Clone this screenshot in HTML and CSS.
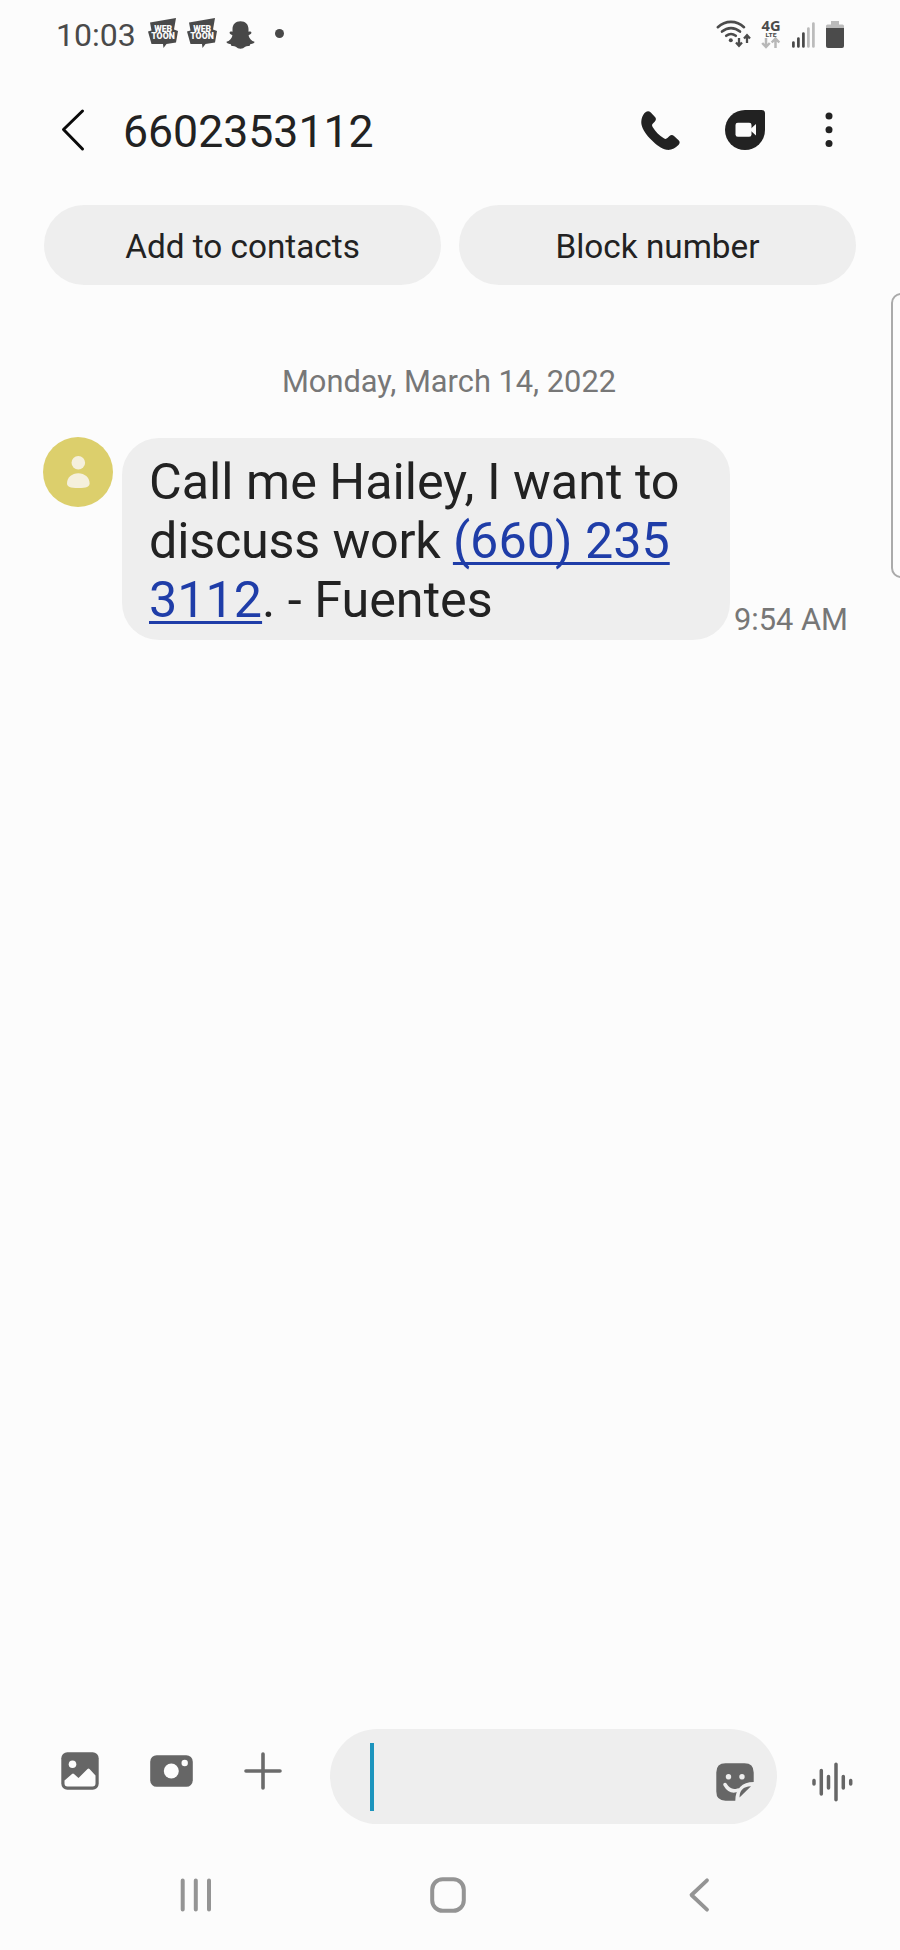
FILE: index.html
```html
<!DOCTYPE html>
<html lang="en">
<head>
<meta charset="utf-8">
<title>6602353112</title>
<link rel="stylesheet" href="styles.css">
</head>
<body>
<div class="screen">
  <div class="status">
    <span class="clock">10:03</span>
    <svg class="toon" width="30" height="31" viewBox="0 0 30 31"><path d="M2 4.500 28 0 26 11.500 30 13 28 24.500 18.500 26 15.500 30 15 26 3.500 26 0 13.500 3.500 12.500Z" fill="#4a4a4a"/><text x="15.200" y="13.500" textLength="18" lengthAdjust="spacingAndGlyphs" class="toon-text">WEB</text><text x="15" y="21.300" textLength="23.500" lengthAdjust="spacingAndGlyphs" class="toon-text">TOON</text></svg>
    <svg class="toon toon-second" width="30" height="31" viewBox="0 0 30 31"><path d="M2 4.500 28 0 26 11.500 30 13 28 24.500 18.500 26 15.500 30 15 26 3.500 26 0 13.500 3.500 12.500Z" fill="#4a4a4a"/><text x="15.200" y="13.500" textLength="18" lengthAdjust="spacingAndGlyphs" class="toon-text">WEB</text><text x="15" y="21.300" textLength="23.500" lengthAdjust="spacingAndGlyphs" class="toon-text">TOON</text></svg>
    <svg class="ghost" width="29" height="28" viewBox="0 0 29 28"><path d="M14.500.3c5 0 8 3.200 8 7.800v2.700c1.300-.4 2.700-.3 2.900.8.200 1-1 1.900-2.900 2.800 1 3.300 3 5.500 6 6.400.3 1.200-1.400 1.900-4.300 2.400l-.7 1.900c-1.700-.1-3.100-.1-4.300.6-1.500 1-2.700 2-4.700 2s-3.200-1-4.700-2c-1.200-.7-2.600-.7-4.300-.6l-.7-1.900C1.900 22.700.2 22 .5 20.800c3-.9 5-3.100 6-6.400-1.900-.9-3.100-1.800-2.900-2.800.2-1.100 1.600-1.200 2.900-.8V8.100c0-4.600 3-7.800 8-7.800Z" fill="#484848"/></svg>
    <span class="more-dot"></span>
    <svg class="wifi" width="36" height="29" viewBox="0 0 36 29" fill="none" stroke="#4b4b4b" stroke-width="2.600" stroke-linecap="round"><path d="M1.800 7.200C9.500.1 20.500.1 28 7.200M6 11.600c5.500-4.700 12.500-4.700 18 0M10.200 15.800c3-2.300 6.600-2.300 9.600 0"/><circle cx="14.800" cy="20.300" r="2" fill="#4b4b4b" stroke="none"/><path d="M23 18v7.500M20 22.500l3 3.200 3-3.200M31 23v-7.500M28 18.500l3-3.200 3 3.200" stroke-width="2.300" stroke-linecap="butt"/></svg>
    <svg class="lte" width="20" height="29" viewBox="0 0 20 29"><path d="M5 18v8.500M1.200 23 5 27l3.800-4M14.500 28v-9M10.700 22.500l3.800-4 3.800 4" fill="none" stroke="#b8b8b8" stroke-width="2.500"/><text x="10" y="11.300" textLength="19" lengthAdjust="spacingAndGlyphs" class="net-gen">4G</text><text x="10" y="16.600" textLength="11" lengthAdjust="spacingAndGlyphs" class="net-type">LTE</text></svg>
    <svg class="bars" width="23" height="26" viewBox="0 0 23 26" stroke-width="2.700" stroke-linecap="round"><path d="M1.400 20.500v4M6.400 16.500v8M11.400 11.500v13" stroke="#484848"/><path d="M16.400 6.500v18M21.400 1.500v23" stroke="#bbb"/></svg>
    <svg class="battery" width="18" height="27" viewBox="0 0 18 27"><path d="M5 0h8v3.500h3.500Q18 3.500 18 5v3H0V5q0-1.500 1.500-1.500H5Z" fill="#bbb"/><path d="M0 7h18v18q0 2-2 2H2q-2 0-2-2Z" fill="#4b4b4b"/></svg>
  </div>

  <header class="header">
    <svg class="back" width="24" height="42" viewBox="0 0 24 42"><path d="M21.500 2 2.500 20.500 21.500 40" fill="none" stroke="#0a0a0a" stroke-width="3" stroke-linecap="round" stroke-linejoin="round"/></svg>
    <h1 class="title">6602353112</h1>
    <svg class="phone" width="39" height="39" viewBox="0 0 39 39"><path d="M4.500 1.200C6.500-.2 8-.2 9.800 1.600l4.200 4.500c1.300 1.400 1.200 3-.1 4.300l-2.200 2.300c-1 1.100-.7 2.200.1 3.600 2.800 4.700 6.500 8.400 11 11 1.400.8 2.500.8 3.600-.2l2.100-2c1.400-1.400 3-1.500 4.500-.1l4.600 4.300c1.400 1.400 1.400 3 .1 4.400-3.200 3.500-7.600 5.800-12.300 5.100-5-.8-10.200-5-14.900-9.700C5.800 24.400 1.500 18.600.5 13.500-.2 9.300 1.100 3.700 4.500 1.200Z" fill="#222"/></svg>
    <svg class="duo" width="40" height="40" viewBox="0 0 40 40"><path d="M20 0h16.500Q40 0 40 3.500V20A20 20 0 1 1 20 0Z" fill="#222"/><rect x="10.500" y="12.800" width="16" height="14" rx="2.300" fill="#fcfcfc"/><path d="M26 18.500 31 14v11.500l-5-4.500Z" fill="#fcfcfc"/></svg>
    <svg class="kebab" width="8" height="36" viewBox="0 0 8 36" fill="#222"><circle cx="4" cy="4" r="3.500"/><circle cx="4" cy="17.800" r="3.500"/><circle cx="4" cy="31.500" r="3.500"/></svg>
  </header>

  <div class="actions">
    <button class="action">Add to contacts</button>
    <button class="action">Block number</button>
  </div>

  <main class="thread">
    <p class="date">Monday, March 14, 2022</p>
    <div class="message">
      <svg class="avatar" width="70" height="70" viewBox="0 0 70 70"><circle cx="35" cy="35" r="35" fill="#dccf6c"/><circle cx="35.300" cy="25.700" r="6.800" fill="#f5f0dc"/><path d="M24 46.500c0-6 5-10.200 11.300-10.200s11.300 4.200 11.300 10.200c0 3-3 4.600-11.300 4.600S24 49.500 24 46.500Z" fill="#f5f0dc"/></svg>
      <div class="bubble">Call me Hailey, I want to<br><span class="tight">discuss work </span><a class="tel">(660) 235<br>3112</a>. - Fuentes</div>
      <span class="time">9:54 AM</span>
    </div>
  </main>

  <div class="composer">
    <svg class="gallery" width="38" height="38" viewBox="0 0 38 38"><rect x=".3" y=".3" width="37.400" height="37.400" rx="6" fill="#666"/><circle cx="11.500" cy="12.300" r="3.800" fill="#fcfcfc"/><path d="M3.500 28.500 11 22q1-.8 2 0l4.500 4 9-9q1-1 2 0l6 6.500v8q0 3-3 3h-25q-3 0-3-3Z" fill="#fcfcfc"/></svg>
    <svg class="camera" width="43" height="32" viewBox="0 0 43 32"><rect x=".2" y=".2" width="42.600" height="31.600" rx="6.500" fill="#666"/><circle cx="21.300" cy="16" r="7.500" fill="#fcfcfc"/><circle cx="34.700" cy="8" r="3.200" fill="#fcfcfc"/></svg>
    <svg class="plus" width="38" height="38" viewBox="0 0 38 38"><path d="M19 2v34M2 19h34" stroke="#6b6b6b" stroke-width="3.600" stroke-linecap="round"/></svg>
    <div class="field">
      <span class="caret"></span>
      <svg class="sticker" width="38" height="38" viewBox="0 0 38 38"><path d="M9.500.3h19Q37.700.3 37.700 9.500V19C26 19 19.300 26 19.300 37.700H9.500Q.3 37.700.3 28.500v-19Q.3.300 9.500.3Z" fill="#666"/><circle cx="12.500" cy="13.800" r="2.700" fill="#eee"/><circle cx="26" cy="13.800" r="2.700" fill="#eee"/><path d="M9 21.500c3.500 6 8 7.500 13 5.500" fill="none" stroke="#eee" stroke-width="3.500" stroke-linecap="round"/><path d="M23.500 34.500c0-7 3.500-11 11.500-11.300Z" fill="#666"/></svg>
    </div>
    <svg class="voice" width="41" height="40" viewBox="0 0 41 40" fill="none" stroke="#666" stroke-width="3.500" stroke-linecap="round"><path d="M2 18.500v3.500M9.300 8.500v23.500M16.500 14.500v11.500M24 2.200v35.600M31.300 14.500v11.500M38.700 18.500v3.500"/></svg>
  </div>

  <nav class="nav">
    <svg class="recents" width="32" height="34" viewBox="0 0 32 34"><path d="M2.700 2.500v29M15.800 2.500v29M29 2.500v29" stroke="#949494" stroke-width="4" stroke-linecap="round"/></svg>
    <svg class="home" width="36" height="36" viewBox="0 0 36 36"><rect x="2.200" y="2.200" width="31.600" height="31.600" rx="10.500" fill="none" stroke="#949494" stroke-width="4"/></svg>
    <svg class="nav-back" width="21" height="34" viewBox="0 0 21 34"><path d="M18 2.300 2.500 17 18 31.700" fill="none" stroke="#949494" stroke-width="3.800" stroke-linecap="round" stroke-linejoin="round"/></svg>
  </nav>
  <div class="edge-handle"></div>
</div>
</body>
</html>
```
FILE: styles.css
```css
* { box-sizing: border-box; }
body { margin: 0; background: #fcfcfc; font-family: Roboto, "Liberation Sans", sans-serif; }
svg { display: block; flex: none; overflow: visible; }
.screen { position: relative; display: flex; flex-direction: column; width: 900px; height: 1950px; overflow: hidden; color: #222; }

.status { display: flex; align-items: center; height: 70px; padding-left: 56px; }
.clock { width: 92px; font-size: 32px; line-height: 38px; color: #4a4a4a; white-space: nowrap; }
.toon { margin-top: -3px; }
.toon-second { margin-left: 9px; }
.toon-text { font: 900 8.500px Roboto, sans-serif; fill: #fcfcfc; text-anchor: middle; }
.ghost { margin: -1px 0 0 9px; }
.more-dot { width: 9px; height: 9px; margin: -4px 0 0 20px; border-radius: 50%; background: #484848; }
.wifi { margin: -2px 0 0 auto; }
.lte { margin: -1px 0 0 9px; }
.net-gen { font: 700 14.500px "Open Sans", sans-serif; fill: #4b4b4b; text-anchor: middle; }
.net-type { font: 700 6px Roboto, sans-serif; fill: #4b4b4b; text-anchor: middle; }
.bars { margin: 0 0 0 11px; }
.battery { margin: -2px 56px 0 11px; }

.header { display: flex; align-items: center; height: 120px; padding-left: 61px; }
.title { margin: 4px 0 0 38px; width: 517px; font-size: 44.600px; line-height: 52px; font-weight: 400; }
.phone { margin-left: 1px; }
.duo { margin-left: 45px; }
.kebab { margin-left: 60px; }

.actions { display: flex; gap: 18px; margin-top: 15px; padding: 0 44px; height: 80px; }
.action { flex: 1; padding: 3px 0 0; border: 0; border-radius: 40px; background: #eee; color: #222; font: 400 33.300px/38px Roboto, sans-serif; }

.thread { flex: 1; }
.date { margin: 77px 2px 0 0; height: 75px; font-size: 30.800px; line-height: 40px; color: #777; text-align: center; }
.message { display: flex; padding-left: 43px; }
.bubble { width: 608px; height: 202px; margin: 1px 0 0 9px; padding: 14px 0 0 27px; border-radius: 37px; background: #eee; font-size: 50.300px; line-height: 59.200px; white-space: nowrap; }
.tight { letter-spacing: -.2px; }
.tel { color: #1f3da8; text-decoration: underline; text-decoration-thickness: 2.500px; text-underline-offset: 4px; text-decoration-skip-ink: none; }
.time { align-self: flex-end; margin: 0 0 1px 4px; font-size: 30.800px; line-height: 38px; color: #777; white-space: nowrap; }

.composer { display: flex; align-items: center; height: 95px; padding-left: 61px; }
.gallery { margin-top: -11px; }
.camera { margin: -11px 0 0 51px; }
.plus { margin: -11px 0 0 51px; }
.field { display: flex; align-items: center; width: 447px; height: 95px; margin-left: 48px; padding: 0 23px 0 40px; border-radius: 48px; background: #eee; }
.caret { width: 4px; height: 68px; background: #1c94bd; }
.sticker { margin: 11px 0 0 auto; }
.voice { margin: 11px 0 0 35px; }

.nav { display: flex; align-items: center; height: 126px; padding: 16px 0 0 180px; }
.home { margin-left: 218px; }
.nav-back { margin-left: 223px; }

.edge-handle { position: absolute; left: 891px; top: 293px; width: 20px; height: 285px; border: 2px solid #aaa; border-radius: 12px; }
```
